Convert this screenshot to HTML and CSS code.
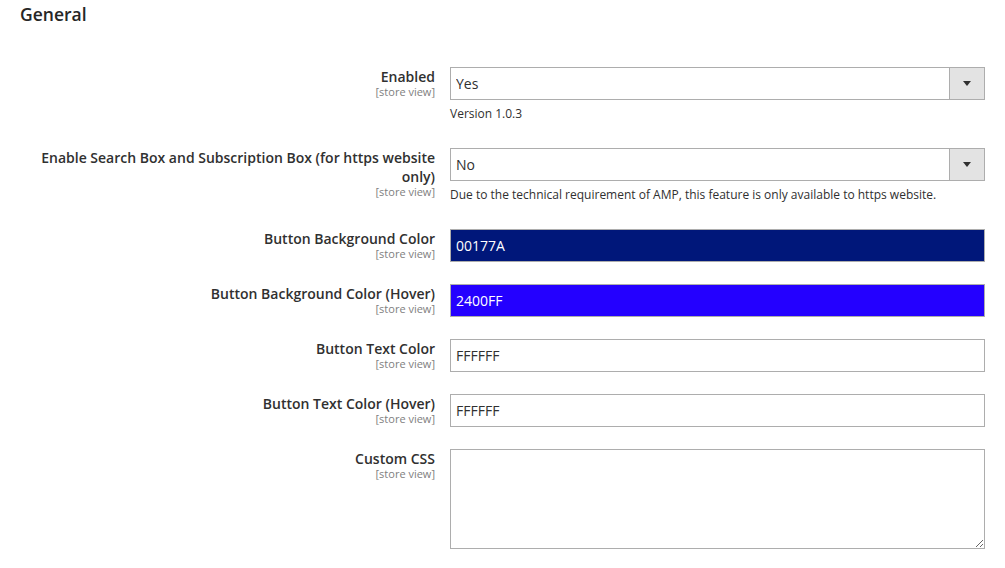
FILE: index.html
```html
<!DOCTYPE html>
<html lang="en">
<head>
<meta charset="utf-8">
<title>General</title>
<link rel="stylesheet" href="styles.css">
</head>
<body>
<div class="page">
  <h2 class="title">General</h2>
  <div class="form">
    <div class="row">
      <div class="label"><span class="lbl">Enabled</span><span class="scope">[store view]</span></div>
      <div class="control">
        <div class="select"><select><option>Yes</option><option>No</option></select><span class="arrow"></span></div>
        <p class="note">Version 1.0.3</p>
      </div>
    </div>
    <div class="row">
      <div class="label"><span class="lbl">Enable Search Box and Subscription Box (for https website only)</span><span class="scope">[store view]</span></div>
      <div class="control">
        <div class="select"><select><option>No</option><option>Yes</option></select><span class="arrow"></span></div>
        <p class="note">Due to the technical requirement of AMP, this feature is only available to https website.</p>
      </div>
    </div>
    <div class="row">
      <div class="label"><span class="lbl">Button Background Color</span><span class="scope">[store view]</span></div>
      <div class="control"><input class="input dark" type="text" value="00177A"></div>
    </div>
    <div class="row">
      <div class="label"><span class="lbl">Button Background Color (Hover)</span><span class="scope">[store view]</span></div>
      <div class="control"><input class="input blue" type="text" value="2400FF"></div>
    </div>
    <div class="row">
      <div class="label"><span class="lbl">Button Text Color</span><span class="scope">[store view]</span></div>
      <div class="control"><input class="input" type="text" value="FFFFFF"></div>
    </div>
    <div class="row">
      <div class="label"><span class="lbl">Button Text Color (Hover)</span><span class="scope">[store view]</span></div>
      <div class="control"><input class="input" type="text" value="FFFFFF"></div>
    </div>
    <div class="row">
      <div class="label"><span class="lbl">Custom CSS</span><span class="scope">[store view]</span></div>
      <div class="control"><textarea class="textarea"></textarea></div>
    </div>
  </div>
</div>
</body>
</html>
```
FILE: styles.css
```css
body {
  margin: 0;
  font-family: "Open Sans", sans-serif;
  color: #303030;
  background: #fff;
}
.page {
  padding: 3px 20px 0 20px;
}
.title {
  margin: 0;
  font-size: 17.5px;
  font-weight: 600;
  line-height: 23px;
  color: #262626;
}
.form {
  margin-top: 41px;
  display: flex;
  flex-direction: column;
  gap: 22px;
}
.row {
  display: grid;
  grid-template-columns: 415px 535px;
  column-gap: 15px;
}
.label {
  text-align: right;
}
.lbl {
  display: block;
  font-size: 14px;
  font-weight: 600;
  line-height: 19px;
  color: #303030;
}
.scope {
  display: block;
  font-size: 11px;
  line-height: 11px;
  margin-top: 0;
  color: #808080;
}
.control {
  min-width: 0;
}
.select {
  box-sizing: border-box;
  display: flex;
  height: 33px;
  border: 1px solid #adadad;
  background: #fff;
}
.select select {
  flex: 1;
  appearance: none;
  -webkit-appearance: none;
  border: 0;
  outline: none;
  background: #fff;
  font: 14px "Open Sans", sans-serif;
  color: #303030;
  padding: 0 5px;
  margin: 0;
}
.arrow {
  width: 34px;
  background: #e3e3e3;
  border-left: 1px solid #adadad;
  display: flex;
  align-items: center;
  justify-content: center;
}
.arrow::before {
  content: "";
  border-left: 4px solid transparent;
  border-right: 4px solid transparent;
  border-top: 5px solid #303030;
}
.note {
  margin: 0;
  padding: 5px 0 3px;
  font-size: 12px;
  line-height: 18px;
  color: #303030;
}
.input {
  box-sizing: border-box;
  display: block;
  width: 100%;
  height: 33px;
  margin: 0;
  border: 1px solid #adadad;
  border-radius: 0;
  padding: 0 5px;
  font: 14px "Open Sans", sans-serif;
  color: #303030;
  background: #fff;
  outline: none;
}
.input.dark {
  background: #00177a;
  color: #fff;
}
.input.blue {
  background: #2400ff;
  color: #fff;
}
.textarea {
  box-sizing: border-box;
  display: block;
  width: 100%;
  height: 100px;
  margin: 0;
  border: 1px solid #adadad;
  border-radius: 0;
  padding: 5px;
  font: 14px "Open Sans", sans-serif;
  color: #303030;
  background: #fff;
  outline: none;
}
```
